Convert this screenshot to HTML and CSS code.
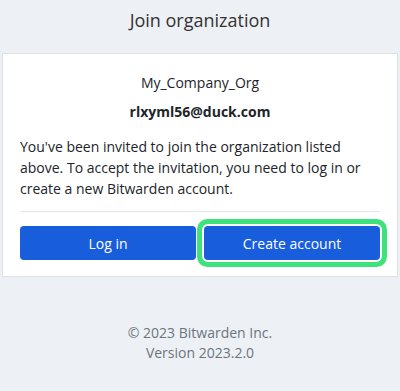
FILE: index.html
```html
<!DOCTYPE html>
<html lang="en">
<head>
<meta charset="utf-8">
<title>Join organization</title>
<link rel="stylesheet" href="styles.css">
</head>
<body>
<div class="page">
  <h1 class="title">Join organization</h1>
  <div class="card">
    <div class="org">My_Company_Org</div>
    <div class="email">rlxyml56@duck.com</div>
    <p class="msg">You've been invited to join the organization listed above. To accept the invitation, you need to log in or create a new Bitwarden account.</p>
    <hr class="sep">
    <div class="actions">
      <button class="btn">Log in</button>
      <button class="btn focused">Create account</button>
    </div>
  </div>
  <footer class="footer">
    <div>© 2023 Bitwarden Inc.</div>
    <div>Version 2023.2.0</div>
  </footer>
</div>
</body>
</html>
```
FILE: styles.css
```css
html, body {
  margin: 0;
  padding: 0;
  background: #edf0f5;
  font-family: "Open Sans", "Liberation Sans", sans-serif;
  color: #212529;
}
.page {
  width: 400px;
  height: 391px;
  overflow: hidden;
}
.title {
  margin: 0;
  padding: 9px 0 0;
  height: 53px;
  box-sizing: border-box;
  text-align: center;
  font-size: 18px;
  line-height: 22px;
  font-weight: 400;
  color: #333;
}
.card {
  margin: 0 2px;
  background: #fff;
  border: 1px solid #dee2e6;
  padding: 18px 17px 16px;
}
.org {
  text-align: center;
  font-size: 14px;
  line-height: 21px;
}
.email {
  text-align: center;
  font-size: 14px;
  line-height: 21px;
  font-weight: 700;
  margin-top: 8px;
}
.msg {
  margin: 14px 0 0;
  font-size: 14px;
  line-height: 21px;
}
.sep {
  margin: 12px 0 14px;
  border: 0;
  border-top: 1px solid #e4e6ea;
}
.actions {
  display: grid;
  grid-template-columns: 1fr 1fr;
  gap: 8px;
}
.btn {
  height: 34px;
  border: 0;
  border-radius: 4px;
  background: #175ddc;
  color: #fff;
  font-family: "Open Sans", "Liberation Sans", sans-serif;
  font-size: 14px;
  padding: 0;
}
.focused {
  box-shadow: 0 0 0 2px #fff, 0 0 0 7px #3de27c;
}
.footer {
  margin-top: 46px;
  text-align: center;
  font-size: 14px;
  line-height: 20px;
  color: #6c757d;
}
```
